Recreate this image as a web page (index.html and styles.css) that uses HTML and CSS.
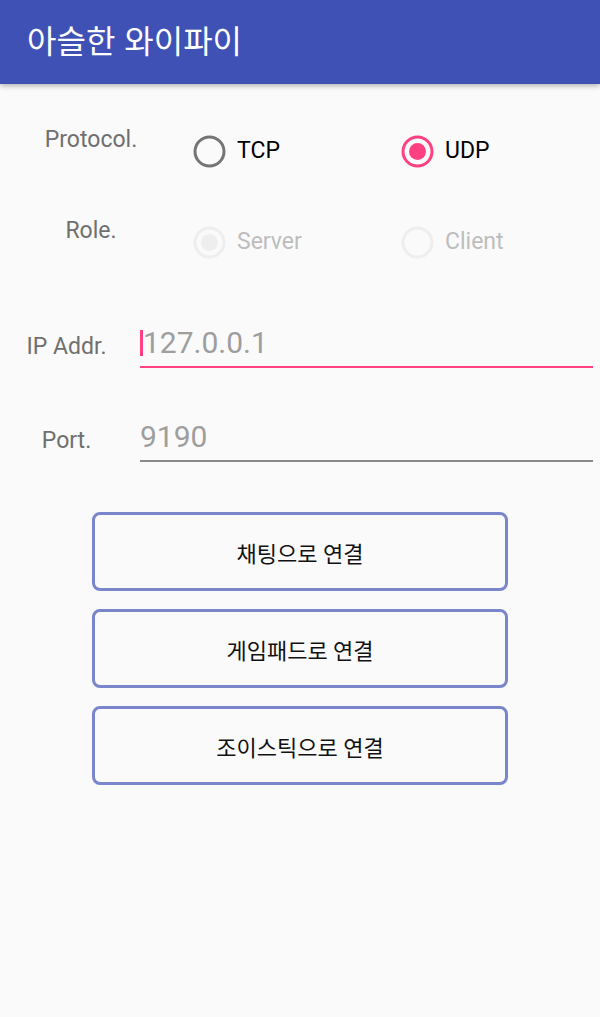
FILE: index.html
```html
<!DOCTYPE html>
<html lang="ko">
<head>
<meta charset="utf-8">
<title>아슬한 와이파이</title>
<link rel="stylesheet" href="styles.css">
</head>
<body>
<header class="appbar">
  <h1 class="appbar-title">아슬한 와이파이</h1>
</header>
<main class="content">
  <div class="radio-row">
    <div class="row-label radio-label">Protocol.</div>
    <div class="radio-group">
      <label class="radio">
        <svg class="radio-icon" width="33" height="33" viewBox="0 0 33 33"><circle cx="16.5" cy="16.5" r="14.5" fill="none" stroke="#757575" stroke-width="3"/></svg>
        <span class="radio-text">TCP</span>
      </label>
      <label class="radio">
        <svg class="radio-icon" width="33" height="33" viewBox="0 0 33 33"><circle cx="16.5" cy="16.5" r="14.5" fill="none" stroke="#FF4081" stroke-width="3"/><circle cx="16.5" cy="16.5" r="8.5" fill="#FF4081"/></svg>
        <span class="radio-text">UDP</span>
      </label>
    </div>
  </div>
  <div class="radio-row">
    <div class="row-label radio-label">Role.</div>
    <div class="radio-group">
      <label class="radio disabled">
        <svg class="radio-icon" width="33" height="33" viewBox="0 0 33 33"><circle cx="16.5" cy="16.5" r="14.5" fill="none" stroke="#EEEEEE" stroke-width="3"/><circle cx="16.5" cy="16.5" r="8.5" fill="#EEEEEE"/></svg>
        <span class="radio-text">Server</span>
      </label>
      <label class="radio disabled">
        <svg class="radio-icon" width="33" height="33" viewBox="0 0 33 33"><circle cx="16.5" cy="16.5" r="14.5" fill="none" stroke="#EEEEEE" stroke-width="3"/></svg>
        <span class="radio-text">Client</span>
      </label>
    </div>
  </div>
  <div class="input-row first">
    <div class="row-label input-label">IP Addr.</div>
    <div class="field focused"><span class="caret"></span><span class="hint">127.0.0.1</span></div>
  </div>
  <div class="input-row">
    <div class="row-label input-label">Port.</div>
    <div class="field"><span class="hint">9190</span></div>
  </div>
  <div class="buttons">
    <button class="btn" type="button">채팅으로 연결</button>
    <button class="btn" type="button">게임패드로 연결</button>
    <button class="btn" type="button">조이스틱으로 연결</button>
  </div>
</main>
</body>
</html>
```

FILE: styles.css
```css
html, body {
  margin: 0;
  padding: 0;
}
body {
  background: #FAFAFA;
  font-family: Roboto, "Noto Sans CJK KR", sans-serif;
  width: 600px;
  height: 1017px;
  overflow: hidden;
}
.appbar {
  height: 84px;
  background: #3F51B5;
  box-shadow: 0 2px 5px rgba(0, 0, 0, 0.28);
  display: flex;
  align-items: center;
  padding: 0 0 6px 27px;
  box-sizing: border-box;
  position: relative;
  z-index: 1;
}
.appbar-title {
  margin: 0;
  color: #FFFFFF;
  font-family: "Noto Sans CJK KR", Roboto, sans-serif;
  font-weight: 400;
  font-size: 32px;
  line-height: 1;
}
.content {
  display: flex;
  flex-direction: column;
}
.row-label {
  flex: none;
  color: #6f6f6f;
  font-size: 23px;
  line-height: 26px;
  text-align: center;
}
.radio-row {
  display: flex;
  height: 64px;
  align-items: center;
  margin-top: 35px;
}
.radio-row + .radio-row {
  margin-top: 27px;
}
.radio-label {
  width: 182px;
  align-self: flex-start;
  padding-top: 8px;
}
.radio-group {
  flex: none;
  display: flex;
  padding-left: 11px;
}
.radio {
  display: flex;
  align-items: center;
  gap: 11px;
}
.radio:first-child {
  width: 208px;
}
.radio-icon {
  display: block;
  flex: none;
}
.radio-text {
  font-size: 23px;
  color: #000000;
  line-height: 26px;
}
.radio.disabled .radio-text {
  color: #BDBDBD;
}
.input-row {
  display: flex;
  align-items: center;
  margin-top: 52px;
}
.input-row.first {
  margin-top: 52px;
}
.input-label {
  width: 133px;
}
.field {
  margin-left: 7px;
  width: 453px;
  font-size: 30px;
  line-height: 34px;
  padding-bottom: 6px;
  border-bottom: 2px solid #8a8a8a;
  color: #9E9E9E;
  white-space: nowrap;
}
.field.focused {
  border-bottom-color: #FF4081;
}
.caret {
  display: inline-block;
  width: 3px;
  height: 26px;
  background: #FF4081;
  vertical-align: -3px;
}
.buttons {
  display: flex;
  flex-direction: column;
  align-items: center;
  gap: 18px;
  margin-top: 50px;
}
.btn {
  width: 416px;
  height: 79px;
  border: 3px solid #7986CB;
  border-radius: 8px;
  background: transparent;
  font-family: Roboto, "Noto Sans CJK KR", sans-serif;
  font-size: 22px;
  color: #111111;
  padding: 0;
}
```
